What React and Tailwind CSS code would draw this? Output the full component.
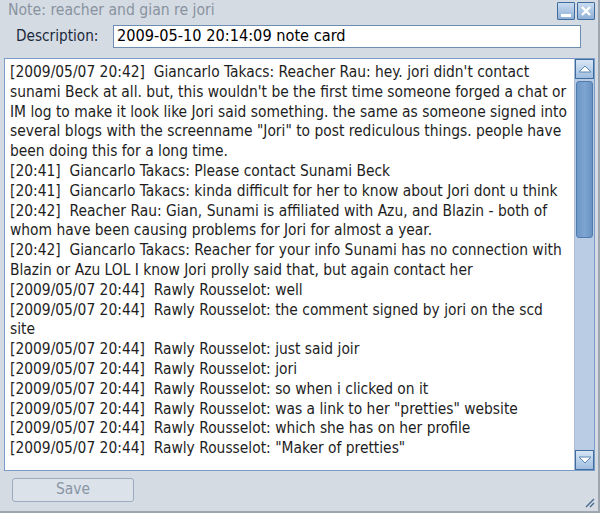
import React from "react";

const lines = [
  "[2009/05/07 20:42]  Giancarlo Takacs: Reacher Rau: hey. jori didn't contact",
  "sunami Beck at all. but, this wouldn't be the first time someone forged a chat or",
  "IM log to make it look like Jori said something. the same as someone signed into",
  "several blogs with the screenname \"Jori\" to post rediculous things. people have",
  "been doing this for a long time.",
  "[20:41]  Giancarlo Takacs: Please contact Sunami Beck",
  "[20:41]  Giancarlo Takacs: kinda difficult for her to know about Jori dont u think",
  "[20:42]  Reacher Rau: Gian, Sunami is affiliated with Azu, and Blazin - both of",
  "whom have been causing problems for Jori for almost a year.",
  "[20:42]  Giancarlo Takacs: Reacher for your info Sunami has no connection with",
  "Blazin or Azu LOL I know Jori prolly said that, but again contact her",
  "[2009/05/07 20:44]  Rawly Rousselot: well",
  "[2009/05/07 20:44]  Rawly Rousselot: the comment signed by jori on the scd",
  "site",
  "[2009/05/07 20:44]  Rawly Rousselot: just said joir",
  "[2009/05/07 20:44]  Rawly Rousselot: jori",
  "[2009/05/07 20:44]  Rawly Rousselot: so when i clicked on it",
  "[2009/05/07 20:44]  Rawly Rousselot: was a link to her \"pretties\" website",
  "[2009/05/07 20:44]  Rawly Rousselot: which she has on her profile",
  "[2009/05/07 20:44]  Rawly Rousselot: \"Maker of pretties\"",
];

const font = { fontFamily: "'DejaVu Sans Condensed', 'DejaVu Sans', sans-serif" };

function Btn({ children }) {
  return (
    <div className="w-[18px] h-[18px] border border-[#3f6c9e] bg-gradient-to-b from-[#c9dbef] to-[#8fb0d6] flex items-center justify-center rounded-[1px]">
      {children}
    </div>
  );
}

export default function App() {
  return (
    <div className="w-[600px] h-[513px] bg-[#d5dbe3] flex flex-col border-r-2 border-b-2 border-r-[#9ea6b0] border-b-[#9ea6b0] relative" style={font}>
      <div className="h-[22px] flex items-center pl-[8px] pr-[3px]">
        <span className="text-[15.6px] text-[#8893a0] flex-1 leading-none">Note: reacher and gian re jori</span>
        <div className="flex gap-[2px]">
          <Btn>
            <div className="w-[10px] h-[3px] bg-white mt-[8px]" />
          </Btn>
          <Btn>
            <svg width="12" height="12" viewBox="0 0 12 12">
              <path d="M2 2L10 10M10 2L2 10" stroke="white" strokeWidth="2.4" />
            </svg>
          </Btn>
        </div>
      </div>
      <div className="flex items-center h-[24px] mt-[2px] pl-[16px] pr-[17px]">
        <span className="text-[15.2px] text-[#1a2a3c] w-[97px]">Description:</span>
        <div className="flex-1 h-[23px] bg-white border border-[#6d8db3] flex items-center pl-[3px] text-[16.2px] text-black">
          2009-05-10 20:14:09 note card
        </div>
      </div>
      <div className="mt-[10px] ml-[4px] mr-[3px] h-[413px] flex border border-[#7a9cc6] bg-white">
        <div className="flex-1 pl-[5px] pt-[4px] text-[15.4px] leading-[19.8px] text-[#1e1e1e] overflow-hidden">
          {lines.map((l, i) => (
            <div key={i} className="whitespace-pre">{l}</div>
          ))}
        </div>
        <div className="w-[20px] bg-[#b9cce3] flex flex-col border-l border-[#a9bcd3]">
          <div className="h-[20px] border border-[#3f6c9e] bg-gradient-to-b from-[#d8e6f4] to-[#9fbde0] flex items-center justify-center">
            <svg width="14" height="10" viewBox="0 0 14 10"><path d="M1 8L7 2L13 8Z" fill="white" stroke="#5a86b8" strokeWidth="1" /></svg>
          </div>
          <div className="h-[157px] mx-[1px] mt-[2px] rounded-[3px] bg-gradient-to-r from-[#6e97c6] via-[#7ea5d1] to-[#6a93c3] border border-[#4f7bae]" />
          <div className="flex-1" />
          <div className="h-[20px] border border-[#3f6c9e] bg-gradient-to-b from-[#d8e6f4] to-[#9fbde0] flex items-center justify-center">
            <svg width="14" height="10" viewBox="0 0 14 10"><path d="M1 2L7 8L13 2Z" fill="white" stroke="#5a86b8" strokeWidth="1" /></svg>
          </div>
        </div>
      </div>
      <div className="pl-[12px] mt-[7px]">
        <div className="w-[122px] h-[24px] border border-[#9aabbf] rounded-[3px] bg-[#dbe2ea] flex items-center justify-center text-[15.4px] text-[#8a96a4]">
          Save
        </div>
      </div>
      <svg className="absolute right-[3px] bottom-[3px]" width="11" height="11" viewBox="0 0 11 11">
        <path d="M10 2L2 10M10 6L6 10" stroke="#4a6a90" strokeWidth="1.4" />
      </svg>
    </div>
  );
}
